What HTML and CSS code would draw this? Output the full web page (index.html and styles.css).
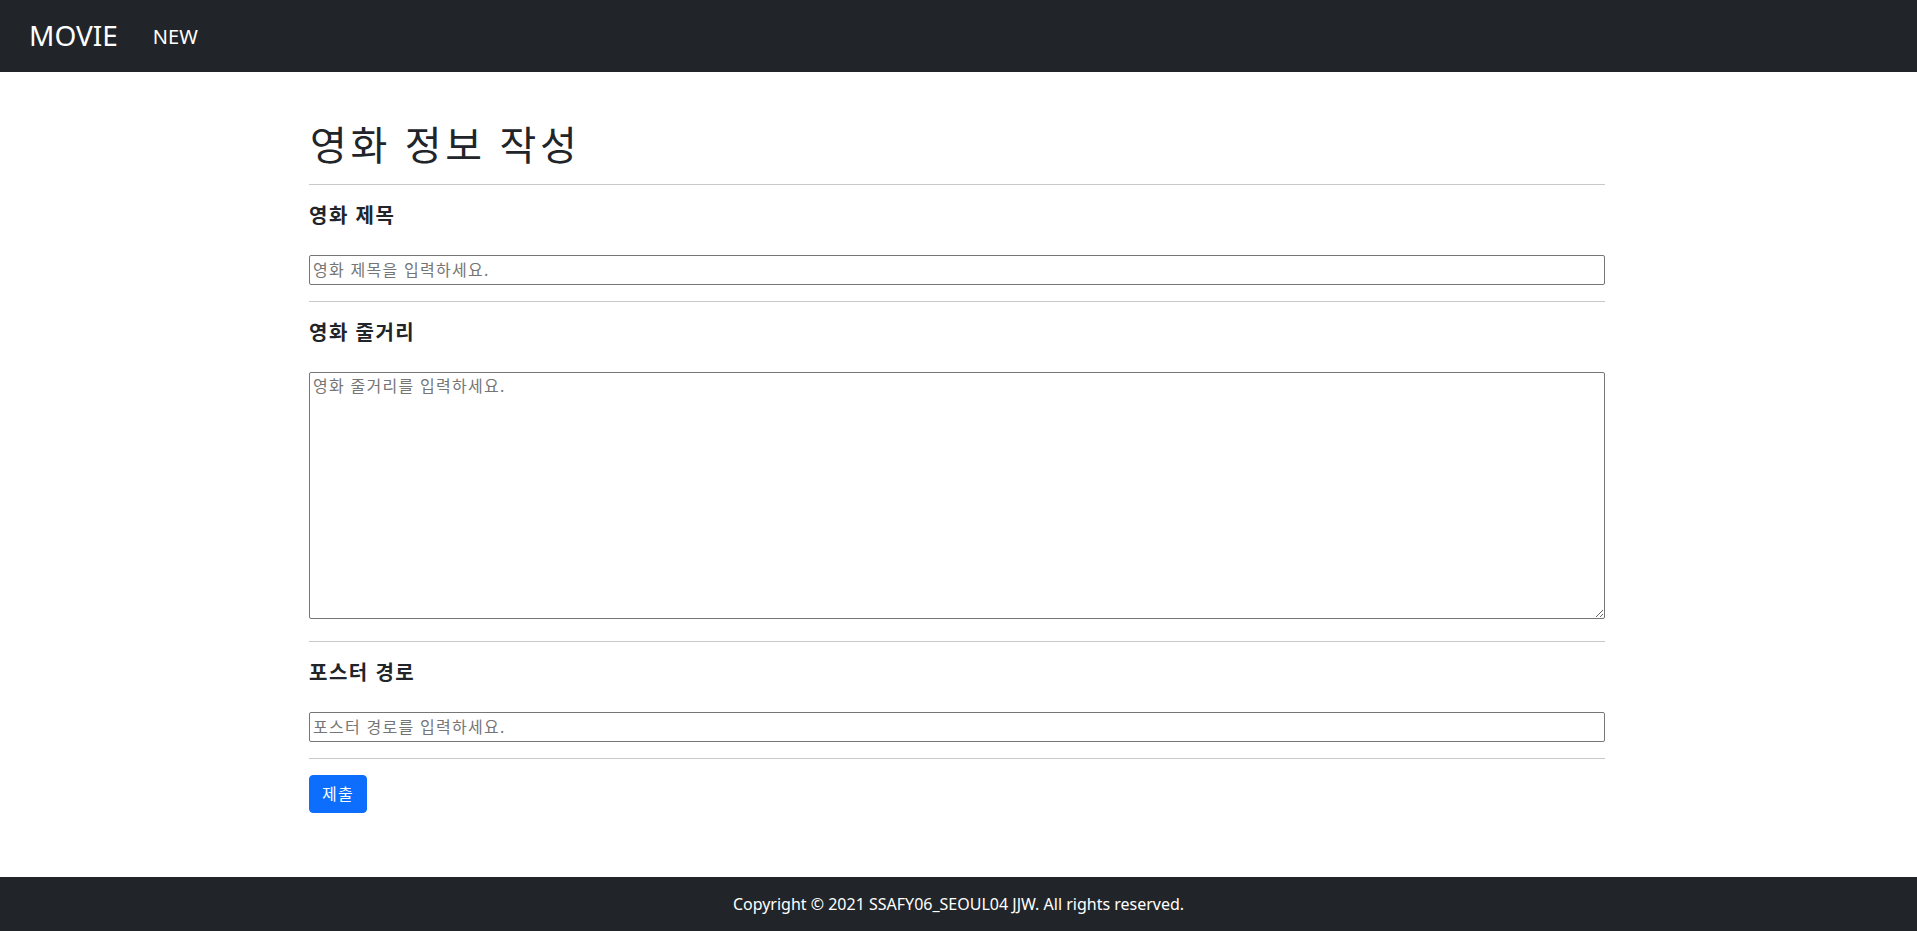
FILE: index.html
```html
<!DOCTYPE html>
<html lang="ko">
<head>
<meta charset="utf-8">
<title>MOVIE</title>
<link rel="stylesheet" href="styles.css">
</head>
<body class="page">
<nav class="navbar">
  <a class="brand" href="#">MOVIE</a>
  <a class="nav-link" href="#">NEW</a>
</nav>
<main class="container">
  <h1 class="title">영화 정보 작성</h1>
  <hr class="divider">
  <form class="movie-form">
    <div class="field">
      <label class="field-label" for="title">영화 제목</label>
      <input class="field-input" id="title" type="text" placeholder="영화 제목을 입력하세요.">
    </div>
    <hr class="divider">
    <div class="field">
      <label class="field-label" for="overview">영화 줄거리</label>
      <textarea class="field-area" id="overview" rows="10" placeholder="영화 줄거리를 입력하세요."></textarea>
    </div>
    <hr class="divider">
    <div class="field">
      <label class="field-label" for="poster">포스터 경로</label>
      <input class="field-input" id="poster" type="text" placeholder="포스터 경로를 입력하세요.">
    </div>
    <hr class="divider">
    <button class="btn-submit" type="submit">제출</button>
  </form>
</main>
<footer class="footer">
  <p class="copyright">Copyright © 2021 SSAFY06_SEOUL04 JJW. All rights reserved.</p>
</footer>
</body>
</html>
```
FILE: styles.css
```css
* { box-sizing: border-box; }

html, body { height: 100%; }

.page {
  margin: 0;
  min-height: 100vh;
  display: flex;
  flex-direction: column;
  font-family: "Noto Sans", "Noto Sans CJK KR", sans-serif;
  font-size: 16px;
  line-height: 1.5;
  color: #212529;
  background: #fff;
}

.navbar {
  height: 72px;
  flex: 0 0 auto;
  background: #212529;
  display: flex;
  align-items: center;
  padding: 0 0 0 29px;
  gap: 35px;
}

.brand {
  color: #fff;
  text-decoration: none;
  font-size: 28px;
  line-height: 1.2;
}

.nav-link {
  color: #fff;
  text-decoration: none;
  font-size: 20px;
  line-height: 1.5;
  margin-top: 1px;
}

.container {
  width: 100%;
  max-width: 1320px;
  margin: 48px 0 0 max(0px, calc(50% - 661.5px));
  padding: 0 12px;
  flex: 1 0 auto;
}

.title {
  margin: 0 0 8px;
  font-size: 40px;
  font-weight: 400;
  line-height: 1.2;
  height: 48px;
  letter-spacing: 0.09em;
  padding-top: 1px;
  padding-left: 1px;
}

.divider {
  margin: 16px 0;
  border: 0;
  border-top: 1px solid #c8c9ca;
  height: 0;
}

.movie-form { margin: 0; }

.field { display: flex; flex-direction: column; }

.field-label {
  font-size: 20px;
  font-weight: 700;
  line-height: 30px;
  height: 30px;
  margin-bottom: 24px;
  letter-spacing: 0.075em;
}

.field-input,
.field-area {
  width: 100%;
  font-family: inherit;
  font-size: 16px;
  line-height: 24px;
  letter-spacing: 0.08em;
  color: #212529;
  padding: 1px 3px;
  border: 1px solid #767676;
  border-radius: 2px;
  background: #fff;
  margin: 0;
}

.field-input { height: 30px; }

.field-area {
  height: 247px;
  resize: vertical;
  margin-bottom: 6px;
}

.field-input::placeholder,
.field-area::placeholder { color: #757575; }

.btn-submit {
  display: inline-block;
  height: 38px;
  padding: 6px 12px;
  font-family: inherit;
  font-size: 16px;
  line-height: 24px;
  letter-spacing: 0.075em;
  color: #fff;
  background: #0d6efd;
  border: 1px solid #0d6efd;
  border-radius: 4px;
  cursor: pointer;
}

.footer {
  flex: 0 0 auto;
  height: 54px;
  background: #212529;
  display: flex;
  align-items: center;
  justify-content: center;
}

.copyright {
  margin: 0;
  color: #fff;
  font-size: 16px;
  line-height: 24px;
}
```
